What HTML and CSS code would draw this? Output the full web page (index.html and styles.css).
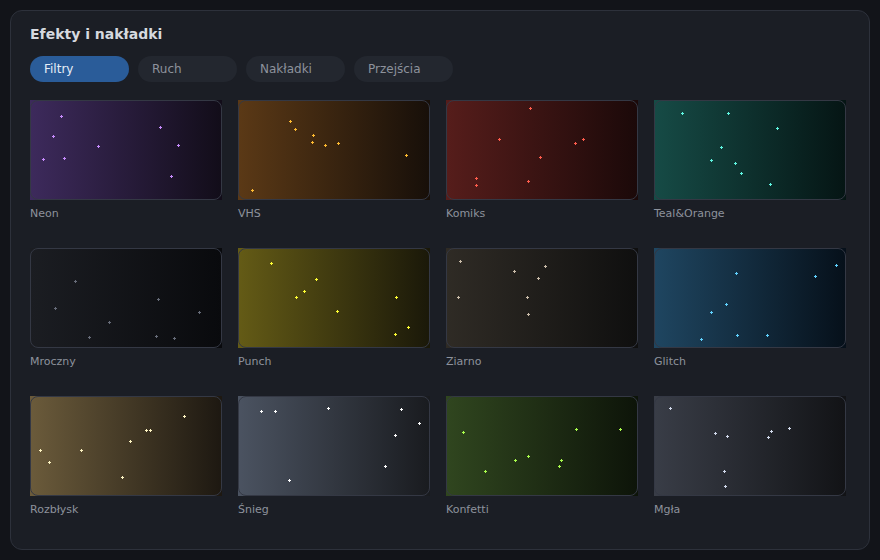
FILE: index.html
```html
<!DOCTYPE html>
<html lang="pl">
<head>
    <meta charset="UTF-8">
    <title>Efekty i nakładki</title>
    <meta name="viewport" content="width=device-width, initial-scale=1.0">
    <link rel="stylesheet" href="styles.css">
</head>
<body>

<div class="panel">
    <h2 class="title">Efekty i nakładki</h2>

    <div class="tabs">
        <button class="tab active">Filtry</button>
        <button class="tab">Ruch</button>
        <button class="tab">Nakładki</button>
        <button class="tab">Przejścia</button>
    </div>

    <div class="grid">
        <div class="effect">
            <div class="thumb neon">
                <svg viewBox="0 0 192 100"><path d="M30 16.5h3M31.5 15v3M22 36.5h3M23.5 35v3M67 46.5h3M68.5 45v3M12 59.5h3M13.5 58v3M33 58.5h3M34.5 57v3M129 27.5h3M130.5 26v3M147 45.5h3M148.5 44v3M140 76.5h3M141.5 75v3"/></svg>
            </div>
            <div class="label">Neon</div>
        </div>
        <div class="effect">
            <div class="thumb vhs">
                <svg viewBox="0 0 192 100"><path d="M51 21.5h3M52.5 20v3M56 29.5h3M57.5 28v3M74 35.5h3M75.5 34v3M73 42.5h3M74.5 41v3M86 45.5h3M87.5 44v3M99 43.5h3M100.5 42v3M167 55.5h3M168.5 54v3M13 90.5h3M14.5 89v3"/></svg>
            </div>
            <div class="label">VHS</div>
        </div>
        <div class="effect">
            <div class="thumb komiks">
                <svg viewBox="0 0 192 100"><path d="M83 8.5h3M84.5 7v3M52 39.5h3M53.5 38v3M128 43.5h3M129.5 42v3M136 39.5h3M137.5 38v3M93 57.5h3M94.5 56v3M29 78.5h3M30.5 77v3M29 85.5h3M30.5 84v3M81 81.5h3M82.5 80v3"/></svg>
            </div>
            <div class="label">Komiks</div>
        </div>
        <div class="effect">
            <div class="thumb teal">
                <svg viewBox="0 0 192 100"><path d="M27 13.5h3M28.5 12v3M73 13.5h3M74.5 12v3M122 28.5h3M123.5 27v3M66 47.5h3M67.5 46v3M56 60.5h3M57.5 59v3M80 63.5h3M81.5 62v3M86 73.5h3M87.5 72v3M115 84.5h3M116.5 83v3"/></svg>
            </div>
            <div class="label">Teal&amp;Orange</div>
        </div>

        <div class="effect">
            <div class="thumb mroczny">
                <svg viewBox="0 0 192 100"><path d="M44 33.5h3M45.5 32v3M24 60.5h3M25.5 59v3M127 51.5h3M128.5 50v3M168 64.5h3M169.5 63v3M78 74.5h3M79.5 73v3M58 89.5h3M59.5 88v3M125 88.5h3M126.5 87v3M143 90.5h3M144.5 89v3"/></svg>
            </div>
            <div class="label">Mroczny</div>
        </div>
        <div class="effect">
            <div class="thumb punch">
                <svg viewBox="0 0 192 100"><path d="M32 15.5h3M33.5 14v3M77 31.5h3M78.5 30v3M65 43.5h3M66.5 42v3M57 49.5h3M58.5 48v3M98 63.5h3M99.5 62v3M157 49.5h3M158.5 48v3M169 79.5h3M170.5 78v3M156 86.5h3M157.5 85v3"/></svg>
            </div>
            <div class="label">Punch</div>
        </div>
        <div class="effect">
            <div class="thumb ziarno">
                <svg viewBox="0 0 192 100"><path d="M13 13.5h3M14.5 12v3M67 23.5h3M68.5 22v3M98 18.5h3M99.5 17v3M91 30.5h3M92.5 29v3M11 49.5h3M12.5 48v3M80 49.5h3M81.5 48v3M81 66.5h3M82.5 65v3"/></svg>
            </div>
            <div class="label">Ziarno</div>
        </div>
        <div class="effect">
            <div class="thumb glitch">
                <svg viewBox="0 0 192 100"><path d="M81 25.5h3M82.5 24v3M160 28.5h3M161.5 27v3M181 17.5h3M182.5 16v3M71 56.5h3M72.5 55v3M56 64.5h3M57.5 63v3M46 91.5h3M47.5 90v3M82 87.5h3M83.5 86v3M112 87.5h3M113.5 86v3"/></svg>
            </div>
            <div class="label">Glitch</div>
        </div>

        <div class="effect">
            <div class="thumb rozblysk">
                <svg viewBox="0 0 192 100"><path d="M153 20.5h3M154.5 19v3M115 34.5h3M116.5 33v3M119 34.5h3M120.5 33v3M99 45.5h3M100.5 44v3M9 54.5h3M10.5 53v3M50 54.5h3M51.5 53v3M18 66.5h3M19.5 65v3M91 81.5h3M92.5 80v3"/></svg>
            </div>
            <div class="label">Rozbłysk</div>
        </div>
        <div class="effect">
            <div class="thumb snieg">
                <svg viewBox="0 0 192 100"><path d="M22 15.5h3M23.5 14v3M36 15.5h3M37.5 14v3M89 12.5h3M90.5 11v3M162 13.5h3M163.5 12v3M180 27.5h3M181.5 26v3M156 39.5h3M157.5 38v3M146 70.5h3M147.5 69v3M50 84.5h3M51.5 83v3"/></svg>
            </div>
            <div class="label">Śnieg</div>
        </div>
        <div class="effect">
            <div class="thumb konfetti">
                <svg viewBox="0 0 192 100"><path d="M16 36.5h3M17.5 35v3M129 33.5h3M130.5 32v3M173 33.5h3M174.5 32v3M81 60.5h3M82.5 59v3M68 64.5h3M69.5 63v3M114 64.5h3M115.5 63v3M112 70.5h3M113.5 69v3M38 75.5h3M39.5 74v3"/></svg>
            </div>
            <div class="label">Konfetti</div>
        </div>
        <div class="effect">
            <div class="thumb mgla">
                <svg viewBox="0 0 192 100"><path d="M15 12.5h3M16.5 11v3M60 37.5h3M61.5 36v3M72 40.5h3M73.5 39v3M116 35.5h3M117.5 34v3M113 41.5h3M114.5 40v3M134 32.5h3M135.5 31v3M69 75.5h3M70.5 74v3M70 90.5h3M71.5 89v3"/></svg>
            </div>
            <div class="label">Mgła</div>
        </div>
    </div>
</div>

</body>
</html>
```

FILE: styles.css
```css
:root {
    --tlo: #121419;
    --panel: #1b1e25;
    --ramka: #2d313b;
    --tekst: #d6d9df;
    --tekst-slaby: #8d929c;
    --niebieski: #2a5c99;
}

* {
    box-sizing: border-box;
}

body {
    font-family: 'DejaVu Sans', Verdana, sans-serif;
    background-color: var(--tlo);
    margin: 0;
    padding: 10px;
    height: 100vh;
}

.panel {
    height: 100%;
    background-color: var(--panel);
    border: 1px solid var(--ramka);
    border-radius: 12px;
    padding: 14px 19px;
}

.title {
    margin: 0;
    font-size: 14px;
    line-height: 18px;
    font-weight: bold;
    color: var(--tekst);
}

.tabs {
    display: flex;
    gap: 9px;
    margin-top: 13px;
}

.tab {
    width: 99px;
    height: 26px;
    padding: 0 14px;
    border: none;
    border-radius: 13px;
    background-color: #23272f;
    color: var(--tekst-slaby);
    font-family: inherit;
    font-size: 12px;
    text-align: left;
    cursor: pointer;
}

.tab.active {
    background-color: var(--niebieski);
    color: #e6edf7;
}

.grid {
    display: grid;
    grid-template-columns: repeat(4, 192px);
    column-gap: 16px;
    row-gap: 27px;
    margin-top: 18px;
}

.thumb {
    position: relative;
    width: 192px;
    height: 100px;
}

.thumb::after {
    content: "";
    position: absolute;
    inset: 0;
    border: 1px solid #343844;
    border-radius: 8px;
}

.thumb svg {
    display: block;
    width: 192px;
    height: 100px;
}

.thumb path {
    fill: none;
    stroke: currentColor;
    stroke-width: 1;
    shape-rendering: crispEdges;
}

.label {
    margin-top: 7px;
    font-size: 11px;
    line-height: 14px;
    color: var(--tekst-slaby);
}

.neon { background: linear-gradient(90deg, #3d2a5c, #120d19); color: #c88cff; }
.vhs { background: linear-gradient(90deg, #5b3916, #170f09); color: #ffbb30; }
.komiks { background: linear-gradient(90deg, #561d1b, #1b0909); color: #ff5c4c; }
.teal { background: linear-gradient(90deg, #164b46, #051514); color: #5ff7e2; }
.mroczny { background: linear-gradient(90deg, #1b1d22, #090a0d); color: #676c79; }
.punch { background: linear-gradient(90deg, #645b16, #1a1809); color: #ffff33; }
.ziarno { background: linear-gradient(90deg, #2f2b25, #0f0f0f); color: #cbbdaa; }
.glitch { background: linear-gradient(90deg, #1f4661, #06101a); color: #60d2ff; }
.rozblysk { background: linear-gradient(90deg, #6b5b3b, #1d1811); color: #fff6c4; }
.snieg { background: linear-gradient(90deg, #4b5361, #191b1f); color: #ffffff; }
.konfetti { background: linear-gradient(90deg, #30461f, #0d1409); color: #aaff4c; }
.mgla { background: linear-gradient(90deg, #393d47, #121316); color: #d2daec; }
```
